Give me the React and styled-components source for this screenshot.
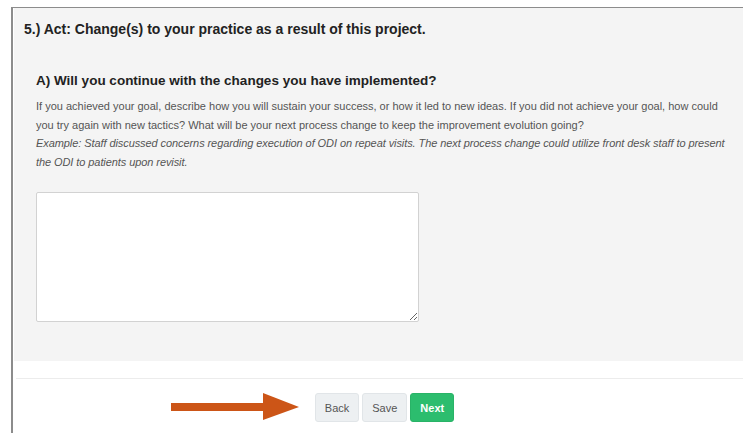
import React from 'react';
import styled, { createGlobalStyle } from 'styled-components';

const Global = createGlobalStyle`
    html, body {
        margin: 0;
        padding: 0;
        background: #fff;
        font-family: "Liberation Sans", Arial, Helvetica, sans-serif;
    }
`

function App() {
    return (
        <>
            <Global />
            <Frame>
                <Panel>
                    <Title>5.) Act: Change(s) to your practice as a result of this project.</Title>
                    <Section>
                        <SectionTitle>A) Will you continue with the changes you have implemented?</SectionTitle>
                        <Help>
                            If you achieved your goal, describe how you will sustain your success, or how it led to new ideas. If you did not achieve your goal, how could you try again with new tactics? What will be your next process change to keep the improvement evolution going?
                            <br />
                            <em>Example: Staff discussed concerns regarding execution of ODI on repeat visits. The next process change could utilize front desk staff to present the ODI to patients upon revisit.</em>
                        </Help>
                        <Answer />
                    </Section>
                </Panel>
                <Footer>
                    <Buttons>
                        <Pointer width="128" height="28" viewBox="0 0 128 28">
                            <rect x="0" y="10" width="93" height="8" fill="#cc5517" />
                            <polygon points="92,0 128,14 92,27" fill="#cc5517" />
                        </Pointer>
                        <Button>Back</Button>
                        <Button>Save</Button>
                        <Button primary>Next</Button>
                    </Buttons>
                </Footer>
            </Frame>
        </>
    )
}

const Frame = styled.div`
    margin: 7px 0 0 11px;
    border-top: 1px solid #8c8c8c;
    border-left: 2px solid #8c8c8c;
    height: 426px;
    box-sizing: border-box;
`

const Panel = styled.div`
    margin-left: 1px;
    background: #f4f4f4;
    padding: 13px 12px 40px 10px;
    height: 353px;
    box-sizing: border-box;
`

const Title = styled.h3`
    margin: 0;
    font-size: 14px;
    font-weight: bold;
    color: #222;
    line-height: 17px;
`

const Section = styled.div`
    padding: 0 0 0 12px;
    margin-top: 33px;
`

const SectionTitle = styled.h4`
    margin: 0 0 6px;
    font-size: 13.5px;
    font-weight: bold;
    color: #222;
    line-height: 20px;
`

const Help = styled.p`
    margin: 0;
    font-size: 11px;
    line-height: 18.5px;
    color: #555;
    em {
        font-style: italic;
        letter-spacing: -0.08px;
    }
`

const Answer = styled.textarea`
    display: block;
    margin-top: 21px;
    width: 383px;
    height: 130px;
    box-sizing: border-box;
    border: 1px solid #d2d2d2;
    border-radius: 2px;
    background: #fff;
    resize: vertical;
`

const Footer = styled.div`
    margin: 17px 0 0 3px;
    border-top: 1px solid #ececec;
    display: flex;
    justify-content: center;
    padding-top: 14px;
    padding-left: 10px;
`

const Buttons = styled.div`
    position: relative;
    display: flex;
    gap: 3px;
`

const Pointer = styled.svg`
    position: absolute;
    right: calc(100% + 16px);
    top: 0;
`

const Button = styled.button`
    height: 29px;
    padding: 0 9px;
    border-radius: 3px;
    font-family: "Liberation Sans", Arial, sans-serif;
    font-size: 11px;
    font-weight: ${p => (p.primary ? 'bold' : 'normal')};
    color: ${p => (p.primary ? '#fff' : '#555')};
    background: ${p => (p.primary ? '#2cbd6e' : '#edf0f2')};
    border: 1px solid ${p => (p.primary ? '#29b367' : '#e1e5e8')};
    cursor: pointer;
`

export default App
